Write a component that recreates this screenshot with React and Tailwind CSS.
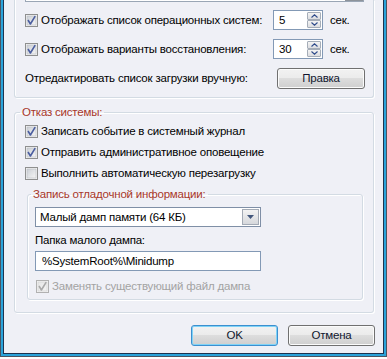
import React from "react";

const font = { fontFamily: '"Liberation Sans", Arial, sans-serif' };
const T = "text-[11.5px] tracking-[-0.2px]";

function Check({ checked = true, disabled = false }) {
  const border = disabled ? "#b1b1b1" : "#8e8f8f";
  const mark = disabled ? "#a9a9a9" : "#4b5ea0";
  return (
    <svg width="13" height="13" viewBox="0 0 13 13" className="shrink-0">
      <defs>
        <linearGradient id={disabled ? "cbgd" : "cbg"} x1="0" y1="0" x2="1" y2="1">
          <stop offset="0" stopColor={disabled ? "#e6e6e6" : "#cbcfd5"} />
          <stop offset="1" stopColor={disabled ? "#f4f4f4" : "#f6f6f6"} />
        </linearGradient>
      </defs>
      <rect x="0.5" y="0.5" width="12" height="12" fill="#f4f4f4" stroke={border} />
      <rect x="2" y="2" width="9" height="9" fill={`url(#${disabled ? "cbgd" : "cbg"})`} stroke={disabled ? "#cfcfcf" : "#b9bcc3"} strokeWidth="0.6" />
      {checked && (
        <path d="M3 6 L5.4 10 L10.2 2.2" fill="none" stroke={mark} strokeWidth="1.6" strokeLinejoin="round" />
      )}
    </svg>
  );
}

function Chevron({ up }) {
  return (
    <svg width="7" height="4" viewBox="0 0 7 4">
      <path d={up ? "M0.5 3.5 L3.5 0.8 L6.5 3.5" : "M0.5 0.5 L3.5 3.2 L6.5 0.5"} fill="none" stroke="#2d4a8a" strokeWidth="1.1" />
    </svg>
  );
}

function Spin({ value }) {
  return (
    <div className="flex w-[50px] h-[20px] border border-[#8399b5] bg-white shrink-0">
      <div className={"flex-1 pl-[5px] leading-[18px] text-black " + T}>{value}</div>
      <div className="flex flex-col w-[15px] py-[1px] pr-[1px] gap-0">
        <div className="flex-1 flex items-center justify-center border border-[#a5adb8] rounded-[1px] bg-[linear-gradient(#f4f4f4,#dcdde0)]">
          <Chevron up />
        </div>
        <div className="flex-1 flex items-center justify-center border border-[#a5adb8] rounded-[1px] bg-[linear-gradient(#f4f4f4,#dcdde0)]">
          <Chevron />
        </div>
      </div>
    </div>
  );
}

function WinButton({ children, def = false, className = "" }) {
  return (
    <button
      className={
        "w-[87px] h-[21px] rounded-[3px] border leading-[19px] text-[#10162e] bg-[linear-gradient(#f2f2f2_0%,#ebebeb_50%,#dddddd_50%,#cfcfcf_100%)] shrink-0 " +
        T +
        " " +
        (def
          ? "border-[#3c8fcf] shadow-[inset_0_0_0_1px_#7fd3f7] "
          : "border-[#707070] shadow-[inset_0_0_0_1px_#fbfbfb] ") +
        className
      }
    >
      {children}
    </button>
  );
}

function CheckRow({ label, checked = true, disabled = false, className = "" }) {
  return (
    <div className={"flex items-center h-[21px] gap-[3px] " + className}>
      <Check checked={checked} disabled={disabled} />
      <span className={"leading-[15px] whitespace-nowrap " + T + " " + (disabled ? "text-[#a3a3a3]" : "text-black")}>
        {label}
      </span>
    </div>
  );
}

export default function App() {
  return (
    <div className="w-[387px] h-[359px] bg-white overflow-hidden" style={font}>
      <div className="w-[387px] h-[357px] border-x border-b border-[#4a5562]">
        <div className="h-full border-x-2 border-b-2 border-[#2aa3da]">
          <div className="h-full border-x border-b border-[#1d3450]">
            <div className="h-full bg-[#eff0f6] flex flex-col">
              {/* Group 1 (top cut off) */}
              <div className="ml-[10px] w-[360px] h-[98px] border-x border-b border-[#d3dbe3] rounded-b-[3px] shadow-[1px_1px_0_#ffffff,inset_1px_0_0_#ffffff] flex flex-col">
                <div className="ml-[10px] w-[339px] h-[2px] flex border-x border-b border-[#9aa6b5]">
                  <div className="flex-1 bg-white" />
                  <div className="w-[18px] bg-[#8d939b]" />
                </div>
                <div className="mt-[8px] h-[20px] flex items-center pl-[10px]">
                  <div className="w-[248px] shrink-0 flex items-center gap-[3px]">
                    <Check />
                    <span className={"leading-[15px] whitespace-nowrap " + T}>Отображать список операционных систем:</span>
                  </div>
                  <Spin value="5" />
                  <span className={"ml-[7px] leading-[15px] " + T}>сек.</span>
                </div>
                <div className="mt-[9px] h-[20px] flex items-center pl-[10px]">
                  <div className="w-[248px] shrink-0 flex items-center gap-[3px]">
                    <Check />
                    <span className={"leading-[15px] whitespace-nowrap " + T}>Отображать варианты восстановления:</span>
                  </div>
                  <Spin value="30" />
                  <span className={"ml-[7px] leading-[15px] " + T}>сек.</span>
                </div>
                <div className="mt-[9px] h-[21px] flex items-center pl-[10px]">
                  <div className={"w-[252px] shrink-0 leading-[15px] whitespace-nowrap " + T}>
                    Отредактировать список загрузки вручную:
                  </div>
                  <WinButton className="w-[88px]">Правка</WinButton>
                </div>
              </div>

              {/* Group 2 */}
              <fieldset className="mt-[7px] ml-[10px] w-[360px] border border-[#d3dbe3] rounded-[3px] shadow-[1px_1px_0_#ffffff,inset_1px_1px_0_#ffffff] p-0 pb-[12px]">
                <legend className={"ml-[5px] px-[2px] leading-[15px] text-[#a8372a] " + T}>Отказ системы:</legend>
                <div className="pl-[10px] flex flex-col">
                  <CheckRow label="Записать событие в системный журнал" className="mt-[1px]" />
                  <CheckRow label="Отправить административное оповещение" />
                  <CheckRow label="Выполнить автоматическую перезагрузку" checked={false} />
                  <fieldset className="mt-[3px] ml-[2px] w-[336px] border border-[#d3dbe3] rounded-[3px] shadow-[1px_1px_0_#ffffff,inset_1px_1px_0_#ffffff] p-0 pb-[2px]">
                    <legend className={"ml-[3px] px-[2px] leading-[15px] text-[#a8372a] " + T}>
                      Запись отладочной информации:
                    </legend>
                    <div className="pl-[7px] flex flex-col">
                      <div className="mt-[5px] w-[226px] h-[20px] flex border border-[#7f8fa6] bg-white">
                        <div className={"flex-1 pl-[4px] leading-[18px] whitespace-nowrap " + T}>
                          Малый дамп памяти (64 КБ)
                        </div>
                        <div className="w-[17px] m-[1px] ml-0 flex items-center justify-center border border-[#a3aab5] bg-[linear-gradient(#f3f3f3,#d6d8dc)]">
                          <svg width="7" height="4" viewBox="0 0 7 4">
                            <path d="M0 0 H7 L3.5 4 Z" fill="#43577c" />
                          </svg>
                        </div>
                      </div>
                      <div className={"mt-[6px] leading-[15px] " + T}>Папка малого дампа:</div>
                      <div className={"mt-[3px] w-[226px] h-[20px] border border-[#8399b5] bg-white pl-[6px] leading-[18px] whitespace-nowrap " + T}>
                        %SystemRoot%\Minidump
                      </div>
                      <CheckRow label="Заменять существующий файл дампа" disabled className="mt-[5px] ml-[1px]" />
                    </div>
                  </fieldset>
                </div>
              </fieldset>

              {/* Buttons */}
              <div className="mt-[12px] flex justify-end gap-[10px] pr-[8px]">
                <WinButton def>OK</WinButton>
                <WinButton>Отмена</WinButton>
              </div>
            </div>
          </div>
        </div>
      </div>
    </div>
  );
}
